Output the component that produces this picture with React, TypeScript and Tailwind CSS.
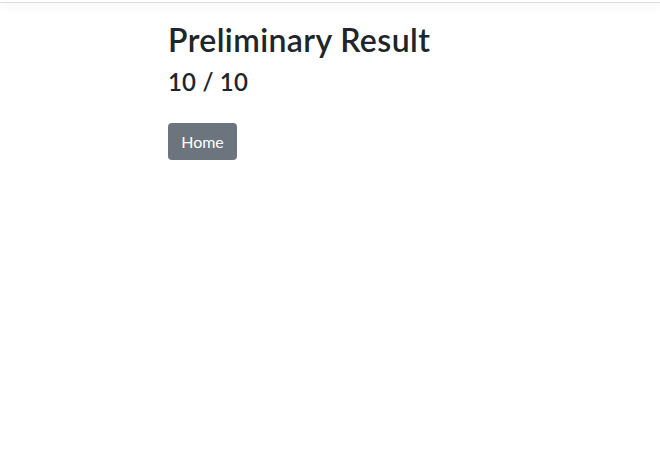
import React from "react";

export default function App() {
  return (
    <div className="min-h-[471px] bg-white font-['Lato','Noto_Sans',sans-serif] text-[#212529]">
      {/* Top bar */}
      <div className="h-[3px] border-b border-[#ddd8e6] shadow-[0_3px_12px_rgba(0,0,0,0.09)]" />

      <div className="pl-[168px] pt-[18px]">
        <h1 className="text-[32px] font-semibold leading-[1.2] tracking-[0.4px]">Preliminary Result</h1>
        <h3 className="mt-[9px] text-[24px] font-semibold leading-[1.2] tracking-[0.2px]">10 / 10</h3>
        <button className="mt-[26px] h-[37px] w-[69px] rounded-[4px] bg-[#6c757d] text-base leading-6 text-white">
          Home
        </button>
      </div>
    </div>
  );
}
